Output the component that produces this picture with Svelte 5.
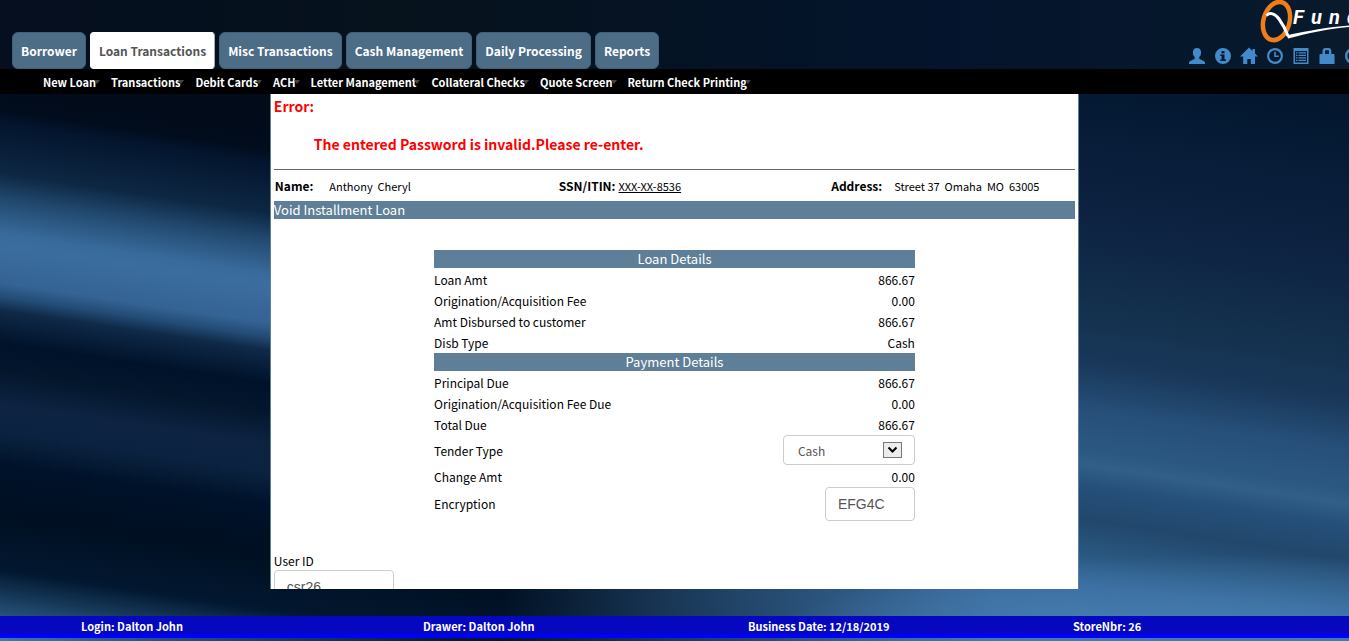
<script>
  const tabs = ['Borrower', 'Loan Transactions', 'Misc Transactions', 'Cash Management', 'Daily Processing', 'Reports'];
  const menu = ['New Loan', 'Transactions', 'Debit Cards', 'ACH', 'Letter Management', 'Collateral Checks', 'Quote Screen', 'Return Check Printing'];
  const loan = [
    ['Loan Amt', '866.67'],
    ['Origination/Acquisition Fee', '0.00'],
    ['Amt Disbursed to customer', '866.67'],
    ['Disb Type', 'Cash']
  ];
  const payment = [
    ['Principal Due', '866.67'],
    ['Origination/Acquisition Fee Due', '0.00'],
    ['Total Due', '866.67']
  ];
  let active = $state('Loan Transactions');
  let tender = $state('Cash');
  let encryption = $state('EFG4C');
  let userId = $state('csr26');
</script>

<div class="page">
  <svg class="backdrop" viewBox="0 0 1349 641" preserveAspectRatio="none" aria-hidden="true">
    <defs>
      <linearGradient id="top" x1="0" x2="1" y1="0" y2="0">
        <stop offset="0" stop-color="#050f20" />
        <stop offset=".3" stop-color="#06121c" />
        <stop offset=".7" stop-color="#03142c" />
        <stop offset="1" stop-color="#081a2c" />
      </linearGradient>
      <linearGradient id="left" gradientUnits="userSpaceOnUse" x1="0" x2="0" y1="90" y2="641">
        <stop offset="0" stop-color="#010b1a" />
        <stop offset=".035" stop-color="#010c1d" />
        <stop offset=".06" stop-color="#04152e" />
        <stop offset=".15" stop-color="#0d2743" />
        <stop offset=".2" stop-color="#224a70" />
        <stop offset=".26" stop-color="#386a9b" />
        <stop offset=".28" stop-color="#3b6e9f" />
        <stop offset=".35" stop-color="#346394" />
        <stop offset=".375" stop-color="#234c76" />
        <stop offset=".4" stop-color="#0f2947" />
        <stop offset=".46" stop-color="#00122a" />
        <stop offset=".51" stop-color="#03162c" />
        <stop offset=".57" stop-color="#0d2341" />
        <stop offset=".62" stop-color="#0b2340" />
        <stop offset=".68" stop-color="#00122a" />
        <stop offset=".77" stop-color="#001022" />
        <stop offset=".87" stop-color="#021730" />
        <stop offset=".91" stop-color="#133452" />
        <stop offset=".96" stop-color="#2a5682" />
        <stop offset="1" stop-color="#4379ad" />
      </linearGradient>
      <linearGradient id="right" gradientUnits="userSpaceOnUse" x1="0" x2="0" y1="60" y2="641">
        <stop offset="0" stop-color="#03162e" />
        <stop offset=".12" stop-color="#061c37" />
        <stop offset=".26" stop-color="#0c2240" />
        <stop offset=".42" stop-color="#13304c" />
        <stop offset=".52" stop-color="#19385a" />
        <stop offset=".6" stop-color="#264f79" />
        <stop offset=".67" stop-color="#2b5881" />
        <stop offset=".695" stop-color="#315f88" />
        <stop offset=".73" stop-color="#25507a" />
        <stop offset=".79" stop-color="#22476c" />
        <stop offset=".85" stop-color="#2a5881" />
        <stop offset=".9" stop-color="#386a9c" />
        <stop offset=".95" stop-color="#4175a8" />
        <stop offset="1" stop-color="#447aad" />
      </linearGradient>
      <linearGradient id="fade" gradientUnits="userSpaceOnUse" x1="500" x2="1079" y1="0" y2="0">
        <stop offset="0" stop-color="#000" />
        <stop offset=".3" stop-color="#606060" />
        <stop offset=".6" stop-color="#b0b0b0" />
        <stop offset=".86" stop-color="#f4f4f4" />
        <stop offset="1" stop-color="#fff" />
      </linearGradient>
      <radialGradient id="glow">
        <stop offset="0" stop-color="#447aad" />
        <stop offset=".4" stop-color="#447aad" stop-opacity=".8" />
        <stop offset="1" stop-color="#447aad" stop-opacity="0" />
      </radialGradient>
      <mask id="blend" maskUnits="userSpaceOnUse" x="400" y="0" width="1000" height="900">
        <rect x="400" y="0" width="1000" height="900" fill="url(#fade)" />
      </mask>
    </defs>
    <rect width="1349" height="641" fill="#00122a" />
    <g transform="skewY(8.5)">
      <rect x="0" y="-300" width="1349" height="1100" fill="url(#left)" />
    </g>
    <g mask="url(#blend)">
      <g transform="translate(1079 0) skewY(8.5)">
        <rect x="-700" y="-100" width="1000" height="900" fill="url(#right)" />
      </g>
    </g>
    <ellipse cx="1230" cy="650" rx="480" ry="95" fill="url(#glow)" />
    <rect width="1349" height="94" fill="url(#top)" />
  </svg>

  <header>
    <nav class="tabs" aria-label="Sections">
      {#each tabs as tab}
        <button class:active={active === tab} onclick={() => (active = tab)}>{tab}</button>
      {/each}
    </nav>
    <div class="tools">
      <svg class="logo" width="90" height="44" viewBox="0 0 90 44">
        <ellipse cx="17.500" cy="21" rx="13" ry="19.500" transform="rotate(16 17.500 21)" fill="none" stroke="#ef7d1a" stroke-width="4.500" />
        <path d="M7.500 15.500C11 12 16 13.500 20 19c4 5.500 6.500 10 9 17" fill="none" stroke="#fff" stroke-width="3" />
        <path d="M27.500 34.500L29 38.500C48 33.500 70 28.500 90 27v-1.500C70 27 48 31 29 35z" fill="#fff" />
        <text x="34 52 70 88" y="24">Fund</text>
      </svg>
      <div class="icons">
        <button aria-label="Customer">
          <svg viewBox="0 0 16 16"><path d="M8 0c3 0 4.300 2 4.100 5-.1 2-.9 3.200-1.800 4v1.600c0 1 5.700 2 5.700 4.200V16H0v-1.200c0-2.200 5.700-3.200 5.700-4.200V9C4.800 8.200 4 7 3.900 5 3.700 2 5 0 8 0z" /></svg>
        </button>
        <button aria-label="Information">
          <svg viewBox="0 0 16 16"><path fill-rule="evenodd" d="M8 0a8 8 0 1 1 0 16A8 8 0 0 1 8 0zM6.500 3v2.400h3V3zM5.300 6.600v1.300h1.300v3.400H5.300V13h5.500v-1.700H9.500V6.600z" /></svg>
        </button>
        <button aria-label="Home">
          <svg viewBox="0 0 16 16"><path d="M8 -.5l3.500 3.500V1H14v4.500l3 3H14V16H9.800v-5H6.300v5H2.200V8.500H-1z" /></svg>
        </button>
        <button aria-label="Time">
          <svg viewBox="0 0 16 16"><path fill-rule="evenodd" d="M8 0a8 8 0 1 1 0 16A8 8 0 0 1 8 0zm0 2.200a5.800 5.800 0 1 0 0 11.600A5.800 5.800 0 0 0 8 2.200z" /><path d="M7.200 3.800h1.600v3.700h3v1.600H7.200z" /></svg>
        </button>
        <button aria-label="List">
          <svg viewBox="0 0 16 16"><path fill-rule="evenodd" d="M.5 0h15v16H.5zM2 3v11.500h12V3z" /><path d="M3 4.300h1.500v1.200H3zm2.500 0H13v1.200H5.500zM3 6.800h1.500V8H3zm2.500 0H13V8H5.500zM3 9.300h1.500v1.200H3zm2.500 0H13v1.200H5.500zM3 11.800h1.500V13H3zm2.500 0H13V13H5.500z" /></svg>
        </button>
        <button aria-label="Lock">
          <svg viewBox="0 0 16 16"><path fill-rule="evenodd" d="M3.500 6V3c0-2 1-3 3-3h2.800c2 0 3 1 3 3v3h2.500l.7.800V16H.5V6.800l.8-.8zM6 6h4V3.300c0-.8-.3-1-1-1H7c-.7 0-1 .2-1 1z" /></svg>
        </button>
        <button aria-label="Sign out">
          <svg viewBox="0 0 16 16"><circle cx="8" cy="8" r="6.800" fill="none" stroke="#428bca" stroke-width="2.400" /></svg>
        </button>
      </div>
    </div>
  </header>

  <nav class="menu" aria-label="Loan menu">
    {#each menu as item}
      <a href="#menu">{item}</a>
    {/each}
  </nav>

  <main>
    <section class="panel">
      <div class="error" role="alert">
        <p>Error:</p>
        <p class="message">The entered Password is invalid.Please re-enter.</p>
      </div>
      <hr />
      <div class="customer">
        <div><b>Name:</b><span class="name">Anthony&nbsp; Cheryl</span></div>
        <div><b>SSN/ITIN:</b><a href="#ssn">XXX-XX-8536</a></div>
        <div><b>Address:</b><span class="address">Street 37&nbsp; Omaha&nbsp; MO&nbsp; 63005</span></div>
      </div>
      <h1>Void Installment Loan</h1>
      <table>
        <tbody>
          <tr><th colspan="2">Loan Details</th></tr>
          {#each loan as [label, value]}
            <tr><td>{label}</td><td>{value}</td></tr>
          {/each}
        </tbody>
        <tbody>
          <tr><th colspan="2">Payment Details</th></tr>
          {#each payment as [label, value]}
            <tr><td>{label}</td><td>{value}</td></tr>
          {/each}
          <tr>
            <td><label for="tender">Tender Type</label></td>
            <td>
              <div class="select">
                <select id="tender" bind:value={tender}>
                  <option>Cash</option>
                  <option>Check</option>
                </select>
                <svg width="19" height="16" viewBox="0 0 19 16" aria-hidden="true">
                  <rect x=".5" y=".5" width="18" height="15" fill="#ececec" stroke="#777" />
                  <path d="M5.500 5.500l4 4 4-4" fill="none" stroke="#000" stroke-width="2" />
                </svg>
              </div>
            </td>
          </tr>
          <tr><td>Change Amt</td><td>0.00</td></tr>
          <tr>
            <td><label for="encryption">Encryption</label></td>
            <td><input id="encryption" class="code" bind:value={encryption} /></td>
          </tr>
        </tbody>
      </table>
      <div class="user">
        <label for="user">User ID</label>
        <input id="user" bind:value={userId} />
      </div>
    </section>
  </main>

  <footer>
    <span>Login: Dalton John</span>
    <span>Drawer: Dalton John</span>
    <span>Business Date: 12/18/2019</span>
    <span>StoreNbr: 26</span>
  </footer>
</div>

<style>
  :global(body) { margin: 0; background: #00122a; }
  .page {
    position: relative;
    display: flex;
    flex-direction: column;
    height: 100vh;
    overflow: hidden;
    font-family: "Noto Sans CJK SC", "Open Sans", sans-serif;
    font-size: 12px;
    line-height: 18px;
    color: #000;
  }
  .backdrop { position: absolute; inset: 0; width: 100%; height: 100%; z-index: -1; }
  header { display: flex; justify-content: space-between; flex: none; height: 69px; }
  .tabs { display: flex; align-items: flex-end; gap: 4px; padding-left: 12px; }
  .tabs button {
    height: 37px;
    padding: 0 8px 1px;
    border: 1px solid #426079;
    border-radius: 6px;
    background: #4d6c86;
    color: #fff;
    font: bold 12px "Noto Sans CJK SC", sans-serif;
    white-space: nowrap;
  }
  .tabs button.active { background: #fff; border-color: #fff #9aacbd #fff #fff; border-radius: 4px; color: #555; }
  .tools { display: flex; flex-direction: column; flex: none; width: 160px; overflow: hidden; }
  .logo { flex: none; margin-left: 70px; }
  .logo text { fill: #fff; font: italic bold 20px Roboto, sans-serif; }
  .icons { display: flex; gap: 10px; padding-top: 4px; }
  .icons button { flex: none; width: 16px; height: 16px; padding: 0; border: 0; background: none; }
  .icons svg { display: block; width: 16px; height: 16px; fill: #428bca; overflow: visible; }
  .menu {
    display: flex;
    flex: none;
    align-items: center;
    gap: 11px;
    height: 25px;
    padding-left: 43px;
    background: #000;
  }
  .menu a { display: flex; align-items: center; color: #fff; font-size: 11px; font-weight: bold; text-decoration: none; white-space: nowrap; }
  .menu a::after { content: ""; margin-left: -2px; border: 3px solid transparent; border-top: 4px solid #444; border-bottom: 0; }
  main { display: flex; justify-content: center; flex: 1; min-height: 0; padding-bottom: 27px; }
  .panel {
    box-sizing: border-box;
    width: 60%;
    padding: 0 3px;
    overflow: hidden;
    border: solid #5f7f98;
    border-width: 0 1px;
    background: #fff;
  }
  .error { padding: 3px 0 16px; color: #f00; font-size: 14px; font-weight: bold; }
  .error p { margin: 0; }
  .error .message { padding: 20px 0 0 40px; }
  hr { height: 1px; margin: 0; border: 0; background: #666; }
  .customer { display: grid; grid-template-columns: 284px 1fr 244px; padding: 7px 0 6px 1px; white-space: nowrap; }
  .customer a { margin-left: 3px; color: #000; font-size: 11px; }
  .customer span { font-size: 11px; }
  .name { margin-left: 16px; }
  .address { margin-left: 12px; }
  h1, th { margin: 0; background: #5f7f98; color: #fff; font-size: 13px; font-weight: normal; line-height: 18px; }
  table { width: 60%; margin: 31px auto 0; border-collapse: collapse; }
  th, td { padding: 0; }
  td { height: 21px; }
  td:last-child { text-align: right; }
  tr:first-child + tr td { padding-top: 1px; }
  input, select {
    box-sizing: border-box;
    border: 1px solid #ccc;
    border-radius: 4px;
    background: #fff;
    color: #555;
  }
  input { height: 34px; padding: 0 12px; font: 14px "Liberation Sans", sans-serif; }
  .code { display: block; width: 90px; margin-left: auto; }
  .select { position: relative; width: 132px; margin-left: auto; padding-bottom: 1px; }
  select { display: block; width: 100%; height: 30px; padding: 0 14px; appearance: none; font: 12px "Noto Sans CJK SC", sans-serif; }
  .select svg { position: absolute; top: 7px; right: 13px; pointer-events: none; }
  .user { display: flex; flex-direction: column; margin-top: 31px; }
  .user input { width: 120px; }
  footer {
    display: grid;
    grid-template-columns: 342fr 325fr 325fr 276fr;
    flex: none;
    height: 18px;
    margin-bottom: 3px;
    padding-left: 6%;
    border-bottom: 4px solid #00f;
    background: #0508be;
    color: #fff;
    font-size: 11px;
    font-weight: bold;
    line-height: 20px;
  }
</style>
